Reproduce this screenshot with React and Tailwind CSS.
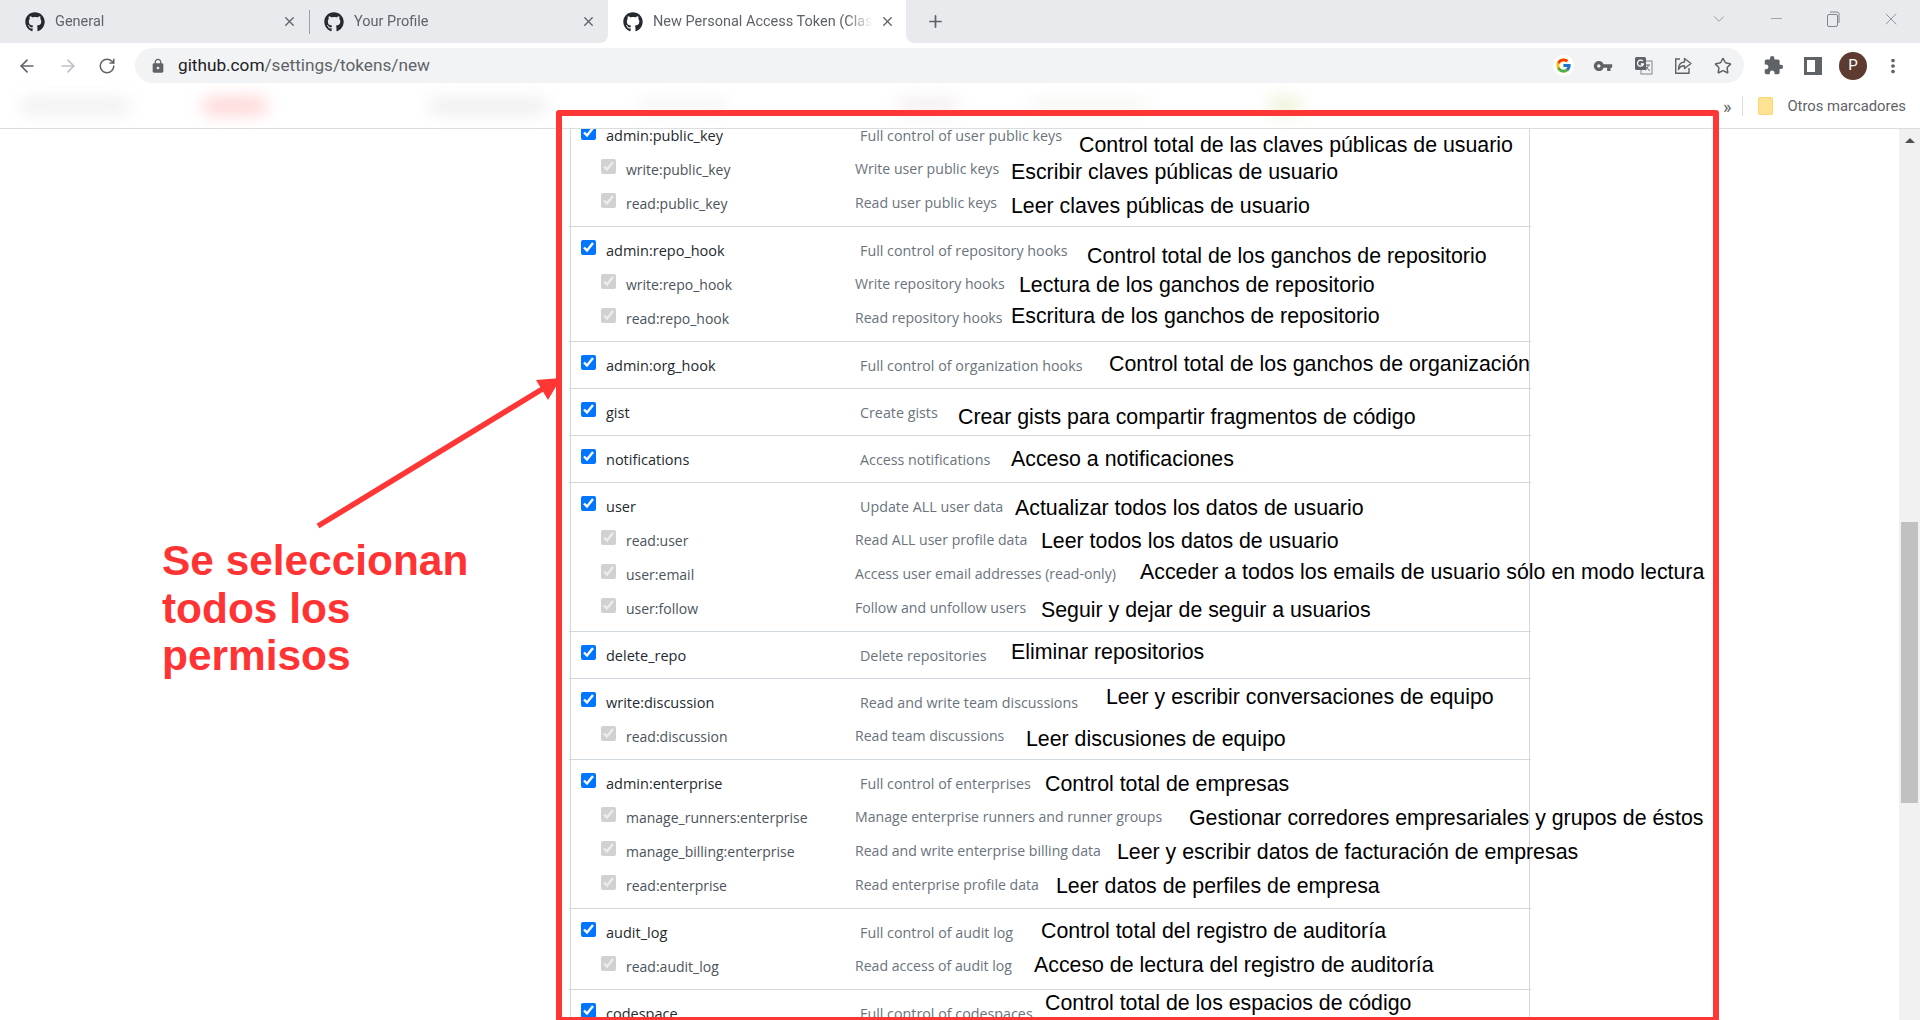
import React from 'react';
import { ArrowLeft, ArrowRight, RotateCw, X, Plus, Star, ChevronDown, Minus } from 'lucide-react';
import { FaGithub } from 'react-icons/fa';
import { FcGoogle } from 'react-icons/fc';
import { MdExtension, MdLock, MdMoreVert, MdVpnKey } from 'react-icons/md';

// left = annotation x inside the row, dy = offset from the row's middle
const groups = [
  [
    { name: 'admin:public_key', desc: 'Full control of user public keys', es: 'Control total de las claves públicas de usuario', left: 508, dy: 10 },
    { name: 'write:public_key', desc: 'Write user public keys', es: 'Escribir claves públicas de usuario', left: 440, dy: 3, sub: true },
    { name: 'read:public_key', desc: 'Read user public keys', es: 'Leer claves públicas de usuario', left: 440, dy: 3, sub: true },
  ],
  [
    { name: 'admin:repo_hook', desc: 'Full control of repository hooks', es: 'Control total de los ganchos de repositorio', left: 516, dy: 6 },
    { name: 'write:repo_hook', desc: 'Write repository hooks', es: 'Lectura de los ganchos de repositorio', left: 448, dy: 1, sub: true },
    { name: 'read:repo_hook', desc: 'Read repository hooks', es: 'Escritura de los ganchos de repositorio', left: 440, dy: -2, sub: true },
  ],
  [{ name: 'admin:org_hook', desc: 'Full control of organization hooks', es: 'Control total de los ganchos de organización', left: 538, dy: -1 }],
  [{ name: 'gist', desc: 'Create gists', es: 'Crear gists para compartir fragmentos de código', left: 387, dy: 5 }],
  [{ name: 'notifications', desc: 'Access notifications', es: 'Acceso a notificaciones', left: 440, dy: 0 }],
  [
    { name: 'user', desc: 'Update ALL user data', es: 'Actualizar todos los datos de usuario', left: 444, dy: 2 },
    { name: 'read:user', desc: 'Read ALL user profile data', es: 'Leer todos los datos de usuario', left: 470, dy: 1, sub: true },
    { name: 'user:email', desc: 'Access user email addresses (read-only)', es: 'Acceder a todos los emails de usuario sólo en modo lectura', left: 569, dy: -2, sub: true },
    { name: 'user:follow', desc: 'Follow and unfollow users', es: 'Seguir y dejar de seguir a usuarios', left: 470, dy: 2, sub: true },
  ],
  [{ name: 'delete_repo', desc: 'Delete repositories', es: 'Eliminar repositorios', left: 440, dy: -3 }],
  [
    { name: 'write:discussion', desc: 'Read and write team discussions', es: 'Leer y escribir conversaciones de equipo', left: 535, dy: -5 },
    { name: 'read:discussion', desc: 'Read team discussions', es: 'Leer discusiones de equipo', left: 455, dy: 3, sub: true },
  ],
  [
    { name: 'admin:enterprise', desc: 'Full control of enterprises', es: 'Control total de empresas', left: 474, dy: 1 },
    { name: 'manage_runners:enterprise', desc: 'Manage enterprise runners and runner groups', es: 'Gestionar corredores empresariales y grupos de éstos', left: 618, dy: 1, sub: true },
    { name: 'manage_billing:enterprise', desc: 'Read and write enterprise billing data', es: 'Leer y escribir datos de facturación de empresas', left: 546, dy: 1, sub: true },
    { name: 'read:enterprise', desc: 'Read enterprise profile data', es: 'Leer datos de perfiles de empresa', left: 485, dy: 1, sub: true },
  ],
  [
    { name: 'audit_log', desc: 'Full control of audit log', es: 'Control total del registro de auditoría', left: 470, dy: -1 },
    { name: 'read:audit_log', desc: 'Read access of audit log', es: 'Acceso de lectura del registro de auditoría', left: 463, dy: -1, sub: true },
  ],
  [{ name: 'codespace', desc: 'Full control of codespaces', es: 'Control total de los espacios de código', left: 474, dy: -10 }],
];

const blobs = [
  { w: 110, gap: 20, cls: 'bg-[#f1f1f1]' },
  { w: 66, gap: 72, cls: 'bg-[#ffd6d6]' },
  { w: 120, gap: 160, cls: 'bg-[#f0f0f0]' },
  { w: 90, gap: 90, cls: 'bg-[#f7f7f7]' },
  { w: 60, gap: 170, cls: 'bg-[#f5f0f3]' },
  { w: 120, gap: 70, cls: 'bg-[#f8f8f6]' },
  { w: 34, gap: 120, cls: 'bg-[#eef2d6]' },
];

const Tab = ({ title, active, first, roundRight }) => (
  <div className={`flex h-[43px] items-center font-['Roboto',sans-serif] text-[14.5px] text-[#5f6368] ${first ? 'w-[310px] pl-[25px]' : 'w-[298px] pl-[14px]'} ${active ? 'rounded-t-lg bg-white' : 'bg-[#e8eaed]'} ${roundRight ? 'rounded-br-lg' : ''}`}>
    <FaGithub className="shrink-0 text-[#24292f]" size={20} />
    <span className="ml-[10px] w-[220px] overflow-hidden whitespace-nowrap [mask-image:linear-gradient(to_right,black_88%,transparent)]">{title}</span>
    <X className="ml-[7px] shrink-0" size={15} strokeWidth={2.2} />
    {first && <div className="ml-[12px] h-[24px] w-px shrink-0 bg-[#9aa0a6]" />}
  </div>
);

const Row = ({ row }) => (
  <div className={`relative flex h-[34px] items-center font-['Open_Sans',sans-serif] leading-none ${row.sub ? 'pb-px' : ''}`}>
    <input
      type="checkbox"
      defaultChecked
      disabled={row.sub}
      className={`h-[15px] w-[15px] shrink-0 ${row.sub ? 'ml-[30px] -translate-y-[3px]' : 'ml-[10px] -translate-y-[4px]'}`}
    />
    <span className={`ml-[10px] whitespace-nowrap ${row.sub ? 'w-[229px] text-[14px] text-[#4b535c]' : 'w-[254px] text-[14.5px] font-medium text-[#24292f]'}`}>{row.name}</span>
    <span className={`whitespace-nowrap text-[#6a737d] ${row.sub ? 'text-[14.1px]' : 'text-[14.3px]'}`}>{row.desc}</span>
    <span
      className="absolute -translate-y-1/2 whitespace-nowrap font-['Liberation_Sans',sans-serif] text-[21.33px] text-black"
      style={{ left: row.left, top: `calc(50% + ${row.dy}px)` }}
    >
      {row.es}
    </span>
  </div>
);

export default function App() {
  return (
    <div className="relative flex h-[1020px] w-[1920px] flex-col overflow-hidden bg-white">
      {/* tab strip */}
      <div className="flex h-[43px] shrink-0 bg-white">
        <Tab title="General" first />
        <Tab title="Your Profile" roundRight />
        <div className="flex w-[298px] rounded-t-lg bg-white pl-px"><Tab title="New Personal Access Token (Classic)" active /></div>
        <div className="flex flex-1 rounded-bl-lg bg-[#e8eaed] text-[#5f6368]">
          <Plus className="ml-[20px] mt-[12px]" size={19} strokeWidth={2.2} />
          <ChevronDown className="ml-[765px] mt-[10px] text-[#80868b]" size={18} strokeWidth={1} />
          <Minus className="ml-[40px] mt-[10px] text-[#80868b]" size={17} strokeWidth={1} />
          <svg className="ml-[41px] mt-[11px]" width="14" height="16" viewBox="0 0 14 16" fill="none" stroke="#80868b">
            <rect x="1.5" y="3.5" width="10" height="12" rx="1.5" />
            <path d="M4 1h7a2 2 0 0 1 2 2v9" />
          </svg>
          <X className="ml-[41px] mt-[9px] text-[#80868b]" size={20} strokeWidth={1} />
        </div>
      </div>

      {/* toolbar */}
      <div className="flex h-[41px] shrink-0 items-center pl-[7px] pr-[7px] pt-[4px] text-[#5f6368]">
        <div className="flex h-9 w-10 items-center justify-center"><ArrowLeft size={20} /></div>
        <div className="flex h-9 w-10 items-center justify-center pl-[2px] text-[#bdc1c6]"><ArrowRight size={20} /></div>
        <div className="flex h-9 w-10 items-center justify-center"><RotateCw size={18} /></div>
        <div className="ml-[8px] flex h-[35px] flex-1 items-center rounded-full bg-[#f1f3f4] pl-[15px] pr-px">
          <MdLock size={16} className="shrink-0" />
          <span className="ml-[12px] font-['Roboto',sans-serif] text-[17.2px] text-[#5f6368]">
            <span className="text-[#202124]">github.com</span>/settings/tokens/new
          </span>
          <div className="ml-auto flex">
            <div className="flex h-9 w-10 items-center justify-center"><span className="flex h-[21px] w-[21px] items-center justify-center rounded-full bg-white"><FcGoogle size={17} /></span></div>
            <div className="flex h-9 w-10 items-center justify-center"><MdVpnKey size={20} /></div>
            <div className="flex h-9 w-10 items-center justify-center">
              <svg width="19" height="19" viewBox="0 0 19 19">
                <rect x="7" y="5" width="11" height="13" fill="#f1f3f4" stroke="#80868b" />
                <rect x="1" y="1" width="11" height="13" rx="1.5" fill="#5f6368" />
                <path d="M8.8 5.2A3 3 0 1 0 9.4 8H6.8" fill="none" stroke="#fff" strokeWidth="1.3" />
                <path d="M12 9h4M14 9v1c0 2-1.5 3.5-3 4M12 11c1 1.5 2.5 3 4 3.5" fill="none" stroke="#5f6368" />
              </svg>
            </div>
            <div className="flex h-9 w-10 items-center justify-center">
              <svg width="20" height="20" viewBox="0 0 20 20" fill="none" stroke="#5f6368" strokeWidth="1.4">
                <path d="M7 3H2.7v14.3H16V12" />
                <path d="M11.5 2.5 18 7.5l-6.5 5V9.7C8.5 9.7 6.5 11 5.5 13.5c0-4.5 2.5-7.3 6-7.5Z" strokeLinejoin="round" />
              </svg>
            </div>
            <div className="flex h-9 w-10 items-center justify-center"><Star size={18} strokeWidth={2} /></div>
          </div>
        </div>
        <div className="ml-[9px] flex">
          <div className="flex h-9 w-10 items-center justify-center"><MdExtension size={21} /></div>
          <div className="flex h-9 w-10 items-center justify-center">
            <svg width="18" height="18" viewBox="0 0 18 18"><path fillRule="evenodd" d="M0 0h18v18H0ZM3 3v12h8V3Z" fill="#5f6368" /></svg>
          </div>
          <div className="flex h-9 w-10 items-center justify-center">
            <span className="flex h-7 w-7 items-center justify-center rounded-full bg-[#5d3b31] font-['Roboto',sans-serif] text-[15px] text-white">P</span>
          </div>
          <div className="flex h-9 w-10 items-center justify-center"><MdMoreVert size={22} /></div>
        </div>
      </div>

      {/* bookmarks bar, blurred in the picture apart from the right end */}
      <div className="flex h-[45px] shrink-0 items-center border-b border-[#dadce0] bg-white">
        <div className="flex w-[1500px] items-center overflow-hidden py-3 blur-[8px]">
          {blobs.map((b) => (
            <div key={b.gap} className={`h-[18px] shrink-0 rounded-full ${b.cls}`} style={{ width: b.w, marginLeft: b.gap }} />
          ))}
        </div>
        <span className="ml-[223px] font-['Roboto',sans-serif] text-[18px] text-[#5f6368]">»</span>
        <div className="ml-[11px] h-[20px] w-px bg-[#dadce0]" />
        <div className="ml-[15px] h-[18px] w-[15px] rounded-[2px] border border-[#f8d775] bg-[#fde293]" />
        <span className="ml-[14px] whitespace-nowrap font-['Roboto',sans-serif] text-[14.8px] text-[#5f6368]">Otros marcadores</span>
      </div>

      {/* page */}
      <div className="flex min-h-0 flex-1 overflow-hidden">
        <div className="w-[570px] shrink-0 pl-[162px] pt-[408px]">
          <p className="font-['Liberation_Sans',sans-serif] text-[42.4px] font-bold leading-[47.5px] text-[#ff3333]">
            Se seleccionan<br />todos los<br />permisos
          </p>
        </div>
        <div className="-mt-[18px] w-[960px] shrink-0 border-x border-[#d0d7de]">
          {groups.map((rows, i) => (
            <div key={rows[0].name} className={`-mx-[2px] px-[2px] pb-[5px] pt-[7px] ${i === 0 ? 'border-t border-transparent' : 'border-t border-[#d0d7de]'}`}>
              {rows.map((row) => <Row key={row.name} row={row} />)}
            </div>
          ))}
        </div>
        <div className="flex-1" />
        <div className="flex w-[21px] shrink-0 flex-col items-center bg-[#f1f1f1]">
          <div className="mt-[9px] h-0 w-0 border-x-[5px] border-b-[5px] border-x-transparent border-b-[#505050]" />
          <div className="mt-[379px] h-[281px] w-[17px] bg-[#c1c1c1]" />
        </div>
      </div>

      {/* annotations drawn on top of the capture */}
      <div className="pointer-events-none absolute left-[556px] top-[110px] h-[913px] w-[1163px] rounded-[3px] border-[6px] border-[#ff3636]" />
      <svg className="pointer-events-none absolute left-[310px] top-[370px]" width="260" height="165" viewBox="310 370 260 165">
        <path d="M318 526 544 388" stroke="#ff3636" strokeWidth="5.5" fill="none" />
        <path d="M561 378 536 380 548 400Z" fill="#ff3636" />
      </svg>
    </div>
  );
}
